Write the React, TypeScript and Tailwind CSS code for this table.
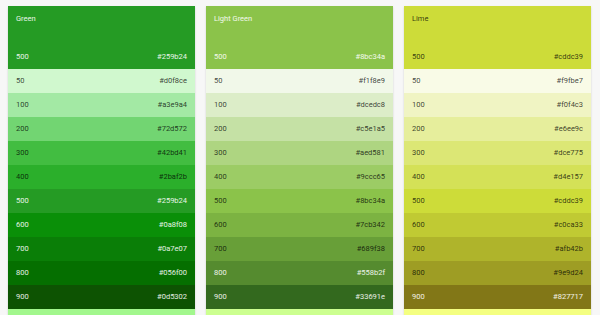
import React from "react";

interface Shade {
    name: string;
    hex: string;
    light?: boolean;
}

interface Palette {
    title: string;
    main: string;
    headLight: boolean;
    accent: string;
    shades: Shade[];
}

const palettes: Palette[] = [
    {
        title: "Green",
        main: "#259b24",
        headLight: true,
        accent: "#a2f78d",
        shades: [
            {name: "50", hex: "#d0f8ce"},
            {name: "100", hex: "#a3e9a4"},
            {name: "200", hex: "#72d572"},
            {name: "300", hex: "#42bd41"},
            {name: "400", hex: "#2baf2b"},
            {name: "500", hex: "#259b24", light: true},
            {name: "600", hex: "#0a8f08", light: true},
            {name: "700", hex: "#0a7e07", light: true},
            {name: "800", hex: "#056f00", light: true},
            {name: "900", hex: "#0d5302", light: true},
        ],
    },
    {
        title: "Light Green",
        main: "#8bc34a",
        headLight: true,
        accent: "#ccff90",
        shades: [
            {name: "50", hex: "#f1f8e9"},
            {name: "100", hex: "#dcedc8"},
            {name: "200", hex: "#c5e1a5"},
            {name: "300", hex: "#aed581"},
            {name: "400", hex: "#9ccc65"},
            {name: "500", hex: "#8bc34a"},
            {name: "600", hex: "#7cb342"},
            {name: "700", hex: "#689f38"},
            {name: "800", hex: "#558b2f", light: true},
            {name: "900", hex: "#33691e", light: true},
        ],
    },
    {
        title: "Lime",
        main: "#cddc39",
        headLight: false,
        accent: "#f4ff81",
        shades: [
            {name: "50", hex: "#f9fbe7"},
            {name: "100", hex: "#f0f4c3"},
            {name: "200", hex: "#e6ee9c"},
            {name: "300", hex: "#dce775"},
            {name: "400", hex: "#d4e157"},
            {name: "500", hex: "#cddc39"},
            {name: "600", hex: "#c0ca33"},
            {name: "700", hex: "#afb42b"},
            {name: "800", hex: "#9e9d24"},
            {name: "900", hex: "#827717", light: true},
        ],
    },
];

const PaletteCard: React.FC<{palette: Palette}> = ({palette}) => {
    const headText = palette.headLight ? "text-white/90" : "text-black/75";
    return (
        <div className="w-[187px] shrink-0 flex flex-col shadow-[0_1px_2px_rgba(0,0,0,0.15)]">
            <div className={`h-[63px] flex flex-col ${headText}`} style={{backgroundColor: palette.main}}>
                <div className="px-2 pt-[8px] leading-[10px]">{palette.title}</div>
                <div className="mt-auto h-[24px] px-2 flex items-center justify-between">
                    <span>500</span>
                    <span>{palette.main}</span>
                </div>
            </div>
            {palette.shades.map((s, i) => (
                <div
                    key={i}
                    className={`h-[24px] shrink-0 px-2 flex items-center justify-between ${s.light ? "text-white/90" : "text-black/75"}`}
                    style={{backgroundColor: s.hex}}
                >
                    <span>{s.name}</span>
                    <span>{s.hex}</span>
                </div>
            ))}
            <div className="h-[24px] shrink-0" style={{backgroundColor: palette.accent}}></div>
        </div>
    );
};

export default function App() {
    return (
        <div className="w-[600px] h-[315px] overflow-hidden bg-[#f7f7f7] font-['Roboto',sans-serif] text-[7.5px]">
            <div className="flex gap-[11px] pl-[8px] pt-[6px]">
                {palettes.map((p, i) => (
                    <PaletteCard key={i} palette={p}/>
                ))}
            </div>
        </div>
    );
}
